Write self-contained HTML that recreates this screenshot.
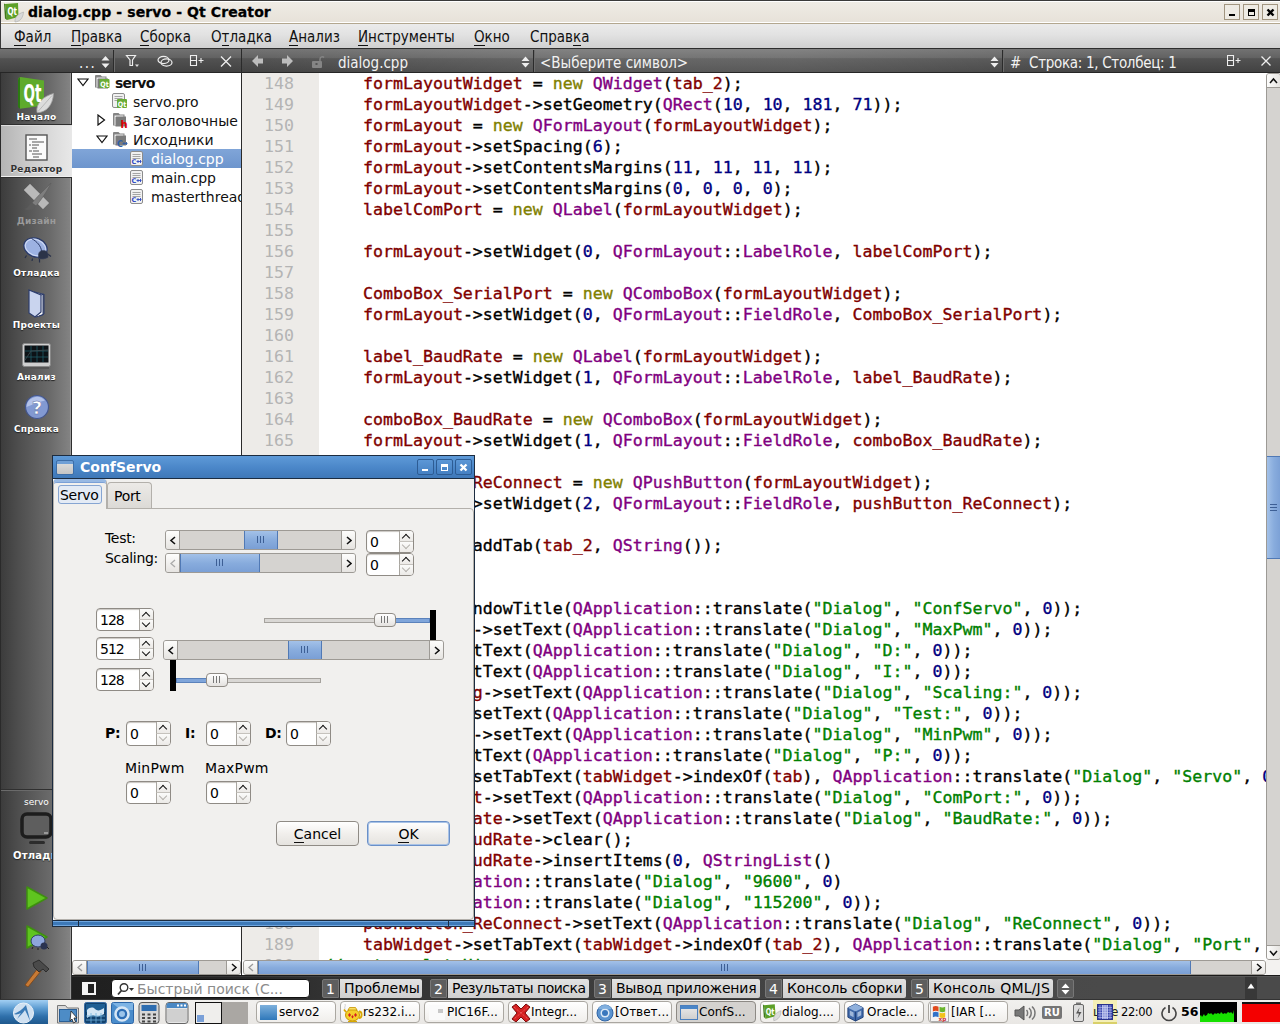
<!DOCTYPE html>
<html lang="ru"><head><meta charset="utf-8"><title>dialog.cpp - servo - Qt Creator</title>
<style>
*{box-sizing:border-box;margin:0;padding:0}
html,body{width:1280px;height:1024px;overflow:hidden;background:#fff}
body{font-family:"DejaVu Sans","Liberation Sans",sans-serif;font-size:14px;color:#000;position:relative}
i{font-style:normal}
.abs{position:absolute}
#title{position:absolute;left:0;top:0;width:1280px;height:24px;background:linear-gradient(#fff 0,#fff 1px,#efece5 1px,#e7e2d9 21px,#fff 21px,#fff 22px,#b3a78f 22px);border-top:1px solid #3a3a3a;border-left:1px solid #3a3a3a}
#title .txt{position:absolute;left:27px;top:2px;font-weight:bold;font-size:14px;line-height:18px;letter-spacing:.1px;white-space:nowrap;-webkit-text-stroke:.3px #000}
.wbtn{position:absolute;top:3px;width:16px;height:16px;border:1px solid #a19580;background:#eeebe4}
#menu{position:absolute;left:0;top:24px;width:1280px;height:24px;background:linear-gradient(#ebebeb,#e2e2e2 45%,#d0d0d0);border-left:1px solid #3a3a3a}
#menu span{position:absolute;top:3px;font-family:"DejaVu Sans Condensed","DejaVu Sans",sans-serif;font-size:15px;line-height:20px;white-space:nowrap;color:#111}
.ul{position:absolute;top:18px;height:1px;background:#111}
#tool{position:absolute;left:0;top:48px;width:1280px;height:25px;background:linear-gradient(90deg,rgba(255,255,255,0) 18%,rgba(255,255,255,.12) 45%,rgba(255,255,255,.12) 62%,rgba(255,255,255,0) 88%),linear-gradient(#727272,#626262 38%,#525252 42%,#454545 90%,#414141);border-top:1px solid #2e2e2e;border-bottom:1px solid #262626}
#tool .t{position:absolute;top:5px;color:#f2f2f2;font-size:15px;line-height:18px;white-space:nowrap;font-family:"DejaVu Sans Condensed","DejaVu Sans",sans-serif}
#tool .sep{position:absolute;top:1px;width:1px;height:22px;background:#2b2b2b;box-shadow:1px 0 0 #6c6c6c}
#mode{position:absolute;left:0;top:73px;width:72px;height:926px;background:linear-gradient(90deg,#3c3c3c,#4e4e4e 25%,#6a6a6a 70%,#848484);border-left:1px solid #2a2a2a;border-right:1px solid #2e2e2e;box-shadow:inset -1px 0 0 #9a9a9a}
#mode .lbl{position:absolute;left:0;width:71px;text-align:center;font-size:9px;font-weight:bold;letter-spacing:.25px;color:#fff;line-height:12px;text-shadow:0 1px 1px #222}
#side{position:absolute;left:72px;top:73px;width:169px;height:902px;background:#fff;overflow:hidden}
#side .row{position:absolute;left:0;width:169px;height:19px;font-size:14px;line-height:21px;white-space:nowrap;font-family:"DejaVu Sans",sans-serif;color:#111}
#vsplit{position:absolute;left:241px;top:49px;width:1px;height:926px;background:#2a2a2a}
#gutter{position:absolute;left:242px;top:73px;width:77px;height:887px;background:#edebe8;overflow:hidden;font-family:"DejaVu Sans Mono",monospace;font-size:16.6px;line-height:21px;color:#b4b4b4;text-align:right;padding-right:25px}
#code{position:absolute;left:319px;top:73px;width:947px;height:887px;background:#fff;overflow:hidden;font-family:"DejaVu Sans Mono",monospace;font-size:16.6px;line-height:21px;padding-left:4px;color:#000;-webkit-text-stroke:.35px}
#code div,#gutter div{height:21px;white-space:pre}
.f{color:#800000}.k{color:#808000}.t{color:#800080}.n{color:#000080}.s{color:#008000}.c{color:#008000}
</style><style>
/* scrollbars */
.hsb{position:absolute;height:15px;background:#d5d3d0;border:1px solid #9d9a95;border-radius:3px;overflow:hidden}
.vsb{position:absolute;width:15px;background:#d5d3d0;border:1px solid #9d9a95;border-radius:3px;overflow:hidden}
.hsb .sbb{position:absolute;top:0;bottom:0;width:14px;background:linear-gradient(#fdfdfc,#e6e4e1);display:flex;align-items:center;justify-content:center}
.hsb .sbb:first-child{border-right:1px solid #9d9a95}
.hsb .sbb:last-child{border-left:1px solid #9d9a95}
.vsb .sbb{position:absolute;left:0;right:0;height:14px;background:linear-gradient(90deg,#fdfdfc,#e6e4e1);display:flex;align-items:center;justify-content:center}
.vsb .sbb:first-child{border-bottom:1px solid #9d9a95}
.vsb .sbb:nth-child(2){border-top:1px solid #9d9a95}
.thumb{position:absolute;top:0;bottom:0;background:linear-gradient(#a3c1e8,#88acdd 50%,#7a9fd5);border-left:1px solid #5079b5;border-right:1px solid #5079b5}
.vsb .thumb{top:auto;bottom:auto;background:linear-gradient(90deg,#a3c1e8,#88acdd 50%,#7a9fd5);border:none;border-top:1px solid #5079b5;border-bottom:1px solid #5079b5}
.grip{position:absolute;left:50%;top:50%;width:7px;height:7px;margin:-4px 0 0 -4px;background:linear-gradient(90deg,#3d5f95 0,#3d5f95 1px,transparent 1px,transparent 3px,#3d5f95 3px,#3d5f95 4px,transparent 4px,transparent 6px,#3d5f95 6px)}
.gripv{position:absolute;left:50%;top:50%;width:7px;height:7px;margin:-4px 0 0 -4px;background:linear-gradient(#3d5f95 0,#3d5f95 1px,transparent 1px,transparent 3px,#3d5f95 3px,#3d5f95 4px,transparent 4px,transparent 6px,#3d5f95 6px)}
/* status */
#status{position:absolute;left:72px;top:975px;width:1208px;height:25px;background:linear-gradient(90deg,#1f1f1f 0,#262626 14%,#323232 21%,#424242 55%,#4a4a4a 85%);border-top:1px solid #1a1a1a;box-shadow:inset 0 1px 0 rgba(255,255,255,.08)}
.ob{position:absolute;top:3px;height:19px;white-space:nowrap;font-size:14px;line-height:19px;font-family:"DejaVu Sans",sans-serif}
.ob b{position:absolute;left:0;top:0;width:17px;height:19px;background:#5e5e5e;border:1px solid #777;border-radius:2px 0 0 2px;color:#fff;font-weight:normal;text-align:center;font-size:14px}
.ob span{position:absolute;left:18px;top:0;height:19px;background:linear-gradient(#e2e2e2,#cfcfcf);color:#000;padding-left:4px;border-radius:0 2px 2px 0;overflow:hidden}
/* taskbar */
#task{position:absolute;left:0;top:999px;width:1280px;height:25px;background:linear-gradient(#f1f0ee,#e9e7e4);border-top:1px solid #333}
.tb{position:absolute;top:1px;width:80px;height:22px;border:1px solid #aaa7a1;border-radius:4px;background:linear-gradient(#fff,#f0eeeb);overflow:hidden}
.tb.act{background:#d4d2cf;border-color:#8d8a85}
.tb .ic{position:absolute;left:4px;top:3px;width:20px;height:15px}
.tb span{position:absolute;left:22px;top:2px;font-size:12px;line-height:17px;white-space:nowrap;font-family:"DejaVu Sans",sans-serif;color:#000}
/* dialog */
#dlg{position:absolute;left:52px;top:455px;width:423px;height:472px;border:1px solid #1c2c40;background:#f1f0ee}
#dtitle{position:absolute;left:0;top:0;width:421px;height:23px;background:linear-gradient(#5e9ad8,#4a86c8 55%,#3f78b8);border-bottom:1px solid #1c2c40}
.dbtn{position:absolute;top:3px;width:17px;height:16px;border:1px solid #2d5c94;border-radius:2px;background:linear-gradient(#5c97d6,#4580c2)}
#dbody{position:absolute;left:0;top:23px;width:421px;height:442px;background:#f1f0ee;box-shadow:inset 1px 0 0 #fff}
#dfoot{position:absolute;left:0;bottom:0;width:421px;height:6px;background:#3d79b8;border-top:1px solid #1c2c40;box-shadow:inset 0 1px 0 #6ea6e0, inset 0 -1px 0 #6ea6e0}
.dl{font-size:14px;line-height:18px;letter-spacing:-.3px;white-space:nowrap;font-family:"DejaVu Sans",sans-serif;color:#000}
.spin{position:absolute;border:1px solid #8f8b85;border-radius:4px;background:#fff;overflow:hidden;box-shadow:inset 0 1px 1px #c9c6c1}
.spin span{position:absolute;left:3px;top:2px;font-size:14px;line-height:18px;letter-spacing:-1px;font-family:"DejaVu Sans",sans-serif}
.spin b{position:absolute;right:0;width:14px;height:50%;background:linear-gradient(#fbfbfa,#eceae7);border-left:1px solid #a9a6a0}
.spin b.up{top:0;border-bottom:1px solid #c5c2bd}
.spin b.dn{bottom:0}
.spin b::after{content:"";position:absolute;left:3px;width:5px;height:5px;border-left:1.500px solid #111;border-top:1.500px solid #111}
.spin b.up::after{top:4px;transform:rotate(45deg)}
.spin b.dn::after{top:0;transform:rotate(225deg)}
.spin b.dis::after{border-color:#b5b2ad;border-width:1px}
.shandle{position:absolute;width:22px;height:14px;border:1px solid #8f8b85;border-radius:4px;background:linear-gradient(#fff,#e4e2df)}
.shandle .grip{background:linear-gradient(90deg,#777 0,#777 1px,transparent 1px,transparent 3px,#777 3px,#777 4px,transparent 4px,transparent 6px,#777 6px)}
.pbtn{position:absolute;width:83px;height:25px;border:1px solid #8f8b85;border-radius:4px;background:linear-gradient(#fff,#f1efec 50%,#e5e3df);font-size:14px;line-height:25px;text-align:center;font-family:"DejaVu Sans",sans-serif}
.pbtn.dflt{border-color:#6a90c8;box-shadow:inset 0 0 0 1px #a8c2e6}
.pbtn .bt{position:relative;display:inline-block}.pbtn .ul{top:20px}
</style>
</head><body>
<!-- ===== main window title ===== -->
<div id="title">
 <svg class="abs" style="left:2px;top:1px" width="22" height="21" viewBox="0 0 22 21"><path d="M2 2L15 1L15.500 15L4 18Z" fill="#5da028"/><path d="M1 1.500L2 2L4 18L2 16.500Z" fill="#3d7a18"/><path d="M20.500 10C15 12 11.500 15 12 20C17 19.500 20 16 20.500 10Z" fill="#d9d9d9" stroke="#ababab" stroke-width=".6"/><text x="4.500" y="13" font-family="DejaVu Sans Condensed,DejaVu Sans" font-weight="bold" font-size="11" fill="#fff" textLength="9.500" lengthAdjust="spacingAndGlyphs">Qt</text></svg>
 <div class="txt">dialog.cpp - servo - Qt Creator</div>
 <div class="wbtn" style="left:1223px"><i class="abs" style="left:4px;top:9px;width:6px;height:2px;background:#000"></i></div>
 <div class="wbtn" style="left:1242px"><i class="abs" style="left:4px;top:4px;width:7px;height:7px;border:1px solid #000;border-top-width:3px"></i></div>
 <div class="wbtn" style="left:1261px"><svg class="abs" style="left:3px;top:3px" width="9" height="9" viewBox="0 0 9 9"><path d="M1.5 1.5L7.5 7.5M7.5 1.5L1.5 7.5" stroke="#000" stroke-width="2.4"/></svg></div>
</div>
<!-- ===== menu ===== -->
<div id="menu">
 <span style="left:13px">Файл<i class="ul" style="left:0px;width:11.6px"></i></span>
 <span style="left:70px">Правка<i class="ul" style="left:0px;width:10.2px"></i></span>
 <span style="left:139px">Сборка<i class="ul" style="left:0px;width:9.4px"></i></span>
 <span style="left:210px">Отладка<i class="ul" style="left:10.6px;width:7.9px"></i></span>
 <span style="left:288px">Анализ<i class="ul" style="left:0px;width:9.2px"></i></span>
 <span style="left:357px">Инструменты<i class="ul" style="left:0px;width:10.1px"></i></span>
 <span style="left:473px">Окно<i class="ul" style="left:0px;width:10.6px"></i></span>
 <span style="left:529px">Справка<i class="ul" style="left:43px;width:8.2px"></i></span>
</div>
<!-- ===== dark toolbar ===== -->
<div id="tool">
 <div class="t" style="left:79px;letter-spacing:1.500px">...</div>
 <svg class="abs" style="left:101px;top:7px" width="9" height="12" viewBox="0 0 9 12"><path d="M4.5 0L8.5 4.5H.5Z M4.5 12L8.5 7.5H.5Z" fill="#eee"/></svg>
 <div class="sep" style="left:113px"></div>
 <svg class="abs" style="left:125px;top:5px" width="16" height="14" viewBox="0 0 16 14"><path d="M1.5 1.5H10.5L7.5 6V11.5H5V6Z" fill="none" stroke="#eee" stroke-width="1.2"/><path d="M10 10.5h4l-2 2.5z" fill="#ddd"/></svg>
 <svg class="abs" style="left:157px;top:6px" width="16" height="12" viewBox="0 0 16 12"><ellipse cx="6.5" cy="5" rx="5.5" ry="3.6" fill="none" stroke="#eee" stroke-width="1.2"/><ellipse cx="9.5" cy="7.5" rx="5.5" ry="3.6" fill="none" stroke="#eee" stroke-width="1.2"/></svg>
 <svg class="abs" style="left:189px;top:6px" width="16" height="12" viewBox="0 0 16 12"><path d="M1.5 .5h6v10h-6zM1.5 5.5h6" fill="none" stroke="#eee" stroke-width="1.1"/><path d="M9.5 5.5h5M12 3v5" stroke="#eee" stroke-width="1.1"/></svg>
 <svg class="abs" style="left:220px;top:7px" width="12" height="11" viewBox="0 0 12 11"><path d="M1 .5L11 10.5M11 .5L1 10.5" stroke="#eee" stroke-width="1.3"/></svg>
 <svg class="abs" style="left:251px;top:5px" width="14" height="14" viewBox="0 0 14 14"><path d="M1 7L7 1V4.500H12V9.500H7V13Z" fill="#bdbdbd"/></svg>
 <svg class="abs" style="left:280px;top:5px" width="14" height="14" viewBox="0 0 14 14"><path d="M13 7L7 1V4.500H2V9.500H7V13Z" fill="#bdbdbd"/></svg>
 <svg class="abs" style="left:311px;top:6px" width="14" height="13" viewBox="0 0 14 13"><rect x="1" y="6" width="10" height="7" rx="1" fill="#858585"/><path d="M9 6V4c0-2 3-3 4-1.500" stroke="#858585" stroke-width="1.4" fill="none"/><rect x="4.500" y="8" width="2" height="2" fill="#555"/></svg>
 <div class="t" style="left:338px">dialog.cpp</div>
 <svg class="abs" style="left:521px;top:7px" width="9" height="12" viewBox="0 0 9 12"><path d="M4.5 .5L8.5 5H.5Z M4.5 11.5L8.5 7H.5Z" fill="#eee"/></svg>
 <div class="sep" style="left:533px"></div>
 <div class="t" style="left:540px">&lt;Выберите символ&gt;</div>
 <svg class="abs" style="left:990px;top:7px" width="9" height="12" viewBox="0 0 9 12"><path d="M4.5 .5L8.5 5H.5Z M4.5 11.500L8.500 7H.5Z" fill="#eee"/></svg>
 <div class="sep" style="left:1002px"></div>
 <div class="t" style="left:1010px">#</div>
 <div class="t" style="left:1029px;letter-spacing:-.3px">Строка: 1, Столбец: 1</div>
 <svg class="abs" style="left:1227px;top:6px" width="16" height="12" viewBox="0 0 16 12"><path d="M.5 .5h6v10h-6zM.5 5.5h6" fill="none" stroke="#eee" stroke-width="1.100"/><path d="M8.500 5.500h5M11 3v5" stroke="#eee" stroke-width="1.100"/></svg>
 <svg class="abs" style="left:1261px;top:7px" width="10" height="10" viewBox="0 0 10 10"><path d="M.5 .5L9.5 9.5M9.5 .5L.5 9.5" stroke="#eee" stroke-width="1.3"/></svg>
</div>
<!-- ===== mode bar ===== -->
<div id="mode">
 <div class="abs" style="left:0;top:51px;width:71px;height:1px;background:#2e2e2e"></div>
 <div class="abs" style="left:0;top:52px;width:71px;height:52px;background:linear-gradient(90deg,#b4b4b4,#cfcfcf 45%,#e8e8e8);border-top:1px solid #dedede;border-bottom:1px solid #f0f0f0"></div>
 <div class="abs" style="left:0;top:104px;width:71px;height:1px;background:#2e2e2e"></div>
 <!-- Qt logo -->
 <svg class="abs" style="left:16px;top:3px" width="38" height="38" viewBox="0 0 38 38"><path d="M1 4Q1 1.500 3.500 1L27 4.500V29.500L3 32.800Z" fill="#5eaa2c"/><path d="M1 4Q1 2 3 1.200L3 32.800L1 31Z" fill="#2c7a12"/><path d="M36.500 17.500C27 20 18.500 27 20 36.500C29 37 36 29 36.500 17.500Z" fill="#dcdcdc" stroke="#a2a2a2" stroke-width=".8"/><path d="M21 35.500L35 19.500" stroke="#b0b0b0" stroke-width=".8"/><text x="6.500" y="26" font-family="DejaVu Sans Condensed,DejaVu Sans" font-weight="bold" font-size="25" fill="#fff" textLength="18" lengthAdjust="spacingAndGlyphs">Qt</text></svg>
 <div class="lbl" style="top:38px">Начало</div>
 <!-- editor -->
 <svg class="abs" style="left:24px;top:61px" width="24" height="28" viewBox="0 0 24 28"><rect x="1" y="1" width="21" height="25" fill="#fafafa" stroke="#555" stroke-width="1.4"/><path d="M4 5h8M7 8h12M4 11h2M7 11h7M7 14h5M4 17h3M8 17h6M7 20h10M8 23h6" stroke="#555" stroke-width="1"/></svg>
 <div class="lbl" style="top:90px;color:#333;text-shadow:0 1px 0 #eee">Редактор</div>
 <!-- design -->
 <svg class="abs" style="left:22px;top:110px" width="30" height="30" viewBox="0 0 30 30"><path d="M1 7L7 1L26 20L20 26Z" fill="#b9b9b9" stroke="#9a9a9a"/><path d="M28 0C20 8 13 15 9 20L13 23C17 18 24 9 28 0Z" fill="#7e7e7e" stroke="#5a5a5a" stroke-width=".6"/><path d="M9 20C6 21 6 25 1 26C6 28 11 27 13 23Z" fill="#5c5c5c"/></svg>
 <div class="lbl" style="top:142px;color:#9a9a9a;text-shadow:none">Дизайн</div>
 <!-- debug -->
 <svg class="abs" style="left:21px;top:163px" width="32" height="28" viewBox="0 0 32 28"><path d="M4.500 19.500l-1.500 2.500M10.500 22.500l-.5 2.500M17.500 23v3.500M25 17.500l4 3" stroke="#27304a" stroke-width="1.200"/><ellipse cx="13.500" cy="11.500" rx="12" ry="9.300" fill="#9db2e2" stroke="#2a3a68" stroke-width="1.200" transform="rotate(22 13.500 11.500)"/><ellipse cx="13.500" cy="11.500" rx="10.500" ry="7.800" fill="none" stroke="#dbe4f7" stroke-width="1" opacity=".8" transform="rotate(22 13.500 11.500)"/><path d="M9.500 2.500C15 5.500 19 10 19.500 15" stroke="#2a3a68" stroke-width="1" fill="none"/><path d="M16.500 22.500V18.500A4.800 4.800 0 0 1 26 18.500V21.500Q21 24 16.500 22.500Z" fill="#2b3348" stroke="#39425c" stroke-width=".6"/></svg>
 <div class="lbl" style="top:194px">Отладка</div>
 <!-- projects -->
 <svg class="abs" style="left:26px;top:215px" width="20" height="30" viewBox="0 0 20 30"><path d="M3 3L16 6V27L9 29Z" fill="#fff" stroke="#2d3d6c"/><path d="M2 2L14 7V24L8 29L2 25Z" fill="#c9d4ee" stroke="#2d3d6c" stroke-width="1.2"/><path d="M14 7L17 6V26L12 28" fill="none" stroke="#2d3d6c"/></svg>
 <div class="lbl" style="top:246px">Проекты</div>
 <!-- analyze -->
 <svg class="abs" style="left:21px;top:270px" width="30" height="26" viewBox="0 0 30 26"><rect x=".5" y=".5" width="28" height="23" rx="2" fill="#cfcfcf" stroke="#888"/><rect x="2.500" y="2.500" width="24" height="17" fill="#0d1216"/><path d="M3 8h23M3 14h23M9 3v16M15 3v16M21 3v16" stroke="#1f5a66" stroke-width=".8"/><path d="M3 17L9 8L26 7" stroke="#37474c" stroke-width="1" fill="none"/><rect x="2" y="24" width="25" height="2" fill="#555"/></svg>
 <div class="lbl" style="top:298px">Анализ</div>
 <!-- help -->
 <svg class="abs" style="left:23px;top:321px" width="26" height="26" viewBox="0 0 26 26"><circle cx="13" cy="13" r="11.500" fill="#8299d2" stroke="#44568c" stroke-width="1.200"/><path d="M2.500 13A10.500 10.500 0 0 1 21 6.500C15 8 8 11 2.500 13Z" fill="#c3d0f0" opacity=".75"/><text x="13" y="20" text-anchor="middle" font-family="DejaVu Sans" font-weight="bold" font-size="18" fill="#fff" stroke="#5a6ca4" stroke-width=".5">?</text></svg>
 <div class="lbl" style="top:350px">Справка</div>
 <!-- target selector -->
 <div class="abs" style="left:0;top:716px;width:71px;height:1px;background:#303030;box-shadow:0 1px 0 #6a6a6a"></div>
 <div class="abs" style="left:0;top:724px;width:71px;text-align:center;font-size:9px;line-height:11px;color:#fff">servo</div>
 <svg class="abs" style="left:19px;top:739px" width="34" height="34" viewBox="0 0 34 34"><rect x="2" y="2" width="29" height="23" rx="5" fill="#5e5e5e" stroke="#1d1d1d" stroke-width="3.500"/><rect x="24" y="20" width="4" height="2" fill="#999"/><rect x="9" y="29" width="16" height="3" rx="1.500" fill="#2c2c2c"/></svg>
 <div class="lbl" style="top:777px;font-size:10px;left:12px;width:58px;text-align:left;overflow:hidden;white-space:nowrap">Отладка</div>
 <!-- run buttons -->
 <svg class="abs" style="left:24px;top:812px" width="24" height="26" viewBox="0 0 24 26"><path d="M2 2L22 13L2 24Z" fill="#5fc41f" stroke="#3e8f10" stroke-width="1.500" stroke-linejoin="round"/></svg>
 <svg class="abs" style="left:24px;top:851px" width="26" height="28" viewBox="0 0 26 28"><path d="M2 2L22 13L2 24Z" fill="#5fc41f" stroke="#3e8f10" stroke-width="1.500" stroke-linejoin="round"/><ellipse cx="13" cy="17" rx="7" ry="6" fill="#8ea6dc" stroke="#2e3d66"/><circle cx="19" cy="22" r="3.500" fill="#2a3350"/><path d="M8 23l-1 2M13 24v2M22 23l2 2" stroke="#222"/></svg>
 <svg class="abs" style="left:20px;top:886px" width="30" height="28" viewBox="0 0 30 28"><path d="M4 26L17 9L20 12L7 28Z" fill="#c77a35" stroke="#7a4418" stroke-width=".8"/><path d="M12 4L18 1L28 10L25 13L22 10L18 13L13 8Z" fill="#4a4a4a" stroke="#222" stroke-width=".8"/></svg>
</div>
<!-- ===== project tree ===== -->
<div id="side">
 <div class="row" style="top:0"><svg class="abs" style="left:5px;top:5px" width="12" height="9" viewBox="0 0 12 9"><path d="M1 1h10L6 7.500z" fill="#fff" stroke="#111" stroke-width="1.200"/></svg>
  <svg class="abs" style="left:22px;top:1px" width="17" height="16" viewBox="0 0 17 16"><path d="M1 13.500V2Q1 1 2 1H6.500L8 2.500H12.500V13.500Z" fill="#858585"/><rect x="2.500" y="3.500" width="9" height="9.500" fill="#f2f2f2"/><path d="M3.500 5.500Q3.500 4.500 4.500 4.500H14V14.500H3.500Z" fill="#7b7b7b"/><g transform="translate(5.500 5)"><rect x="0" y="0" width="10" height="9" rx="1" fill="#68ac35"/><text x=".8" y="7.500" font-family="DejaVu Sans Condensed,DejaVu Sans" font-weight="bold" font-size="7.500" fill="#fff" textLength="8.500" lengthAdjust="spacingAndGlyphs">Qt</text></g></svg>
  <span class="abs" style="left:43px;font-weight:bold;letter-spacing:-.8px;font-family:'DejaVu Sans',sans-serif">servo</span></div>
 <div class="row" style="top:19px"><svg class="abs" style="left:40px;top:1px" width="17" height="16" viewBox="0 0 17 16"><rect x=".5" y=".5" width="12" height="14" rx="1.500" fill="#f1f1f1" stroke="#8c8c8c"/><path d="M2.500 3.500h8M2.500 5.500h8M2.500 7.500h8" stroke="#a5a5a5"/><g transform="translate(5 6)"><rect x="0" y="0" width="10" height="9" rx="1" fill="#68ac35"/><text x=".8" y="7.500" font-family="DejaVu Sans Condensed,DejaVu Sans" font-weight="bold" font-size="7.500" fill="#fff" textLength="8.500" lengthAdjust="spacingAndGlyphs">Qt</text></g></svg>
  <span class="abs" style="left:61px">servo.pro</span></div>
 <div class="row" style="top:38px"><svg class="abs" style="left:25px;top:3px" width="9" height="12" viewBox="0 0 9 12"><path d="M1 1v10L7.500 6z" fill="#fff" stroke="#111" stroke-width="1.200"/></svg>
  <svg class="abs" style="left:40px;top:1px" width="17" height="16" viewBox="0 0 17 16"><path d="M1 13.500V2Q1 1 2 1H6.500L8 2.500H12.500V13.500Z" fill="#858585"/><rect x="2.500" y="3.500" width="9" height="9.500" fill="#f2f2f2"/><path d="M3.500 5.500Q3.500 4.500 4.500 4.500H14V14.500H3.500Z" fill="#7b7b7b"/><text x="8.500" y="15.500" font-family="DejaVu Sans" font-weight="bold" font-size="10" fill="#e00000">h</text></svg>
  <span class="abs" style="left:61px">Заголовочные</span></div>
 <div class="row" style="top:57px"><svg class="abs" style="left:24px;top:5px" width="12" height="9" viewBox="0 0 12 9"><path d="M1 1h10L6 7.500z" fill="#fff" stroke="#111" stroke-width="1.200"/></svg>
  <svg class="abs" style="left:40px;top:1px" width="17" height="16" viewBox="0 0 17 16"><path d="M1 13.500V2Q1 1 2 1H6.500L8 2.500H12.500V13.500Z" fill="#858585"/><rect x="2.500" y="3.500" width="9" height="9.500" fill="#f2f2f2"/><path d="M3.500 5.500Q3.500 4.500 4.500 4.500H14V14.500H3.500Z" fill="#7b7b7b"/><text x="5" y="15.500" font-family="DejaVu Sans" font-weight="bold" font-size="8" fill="#2f5fa8">C</text><path d="M10.500 12.500h5M12 11v3M14.500 11v3" stroke="#2f5fa8" stroke-width=".9"/></svg>
  <span class="abs" style="left:61px">Исходники</span></div>
 <div class="row" style="top:76px;background:linear-gradient(#80a5d8,#6d95cd);color:#fff"><svg class="abs" style="left:58px;top:2px" width="14" height="15" viewBox="0 0 14 15"><rect x=".5" y=".5" width="12" height="14" rx="1.500" fill="#f1f1f1" stroke="#8c8c8c"/><path d="M2.500 3.500h8M2.500 5.500h8M2.500 7.500h8" stroke="#a5a5a5"/><text x="1.500" y="12.500" font-family="DejaVu Sans" font-weight="bold" font-size="6.500" fill="#2f49c4">C</text><path d="M6.500 10.500h5M8 9v3M10.500 9v3" stroke="#2f49c4" stroke-width=".9"/></svg>
  <span class="abs" style="left:79px">dialog.cpp</span></div>
 <div class="row" style="top:95px"><svg class="abs" style="left:58px;top:2px" width="14" height="15" viewBox="0 0 14 15"><rect x=".5" y=".5" width="12" height="14" rx="1.500" fill="#f1f1f1" stroke="#8c8c8c"/><path d="M2.500 3.500h8M2.500 5.500h8M2.500 7.500h8" stroke="#a5a5a5"/><text x="1.500" y="12.500" font-family="DejaVu Sans" font-weight="bold" font-size="6.500" fill="#2f49c4">C</text><path d="M6.500 10.500h5M8 9v3M10.500 9v3" stroke="#2f49c4" stroke-width=".9"/></svg>
  <span class="abs" style="left:79px">main.cpp</span></div>
 <div class="row" style="top:114px"><svg class="abs" style="left:58px;top:2px" width="14" height="15" viewBox="0 0 14 15"><rect x=".5" y=".5" width="12" height="14" rx="1.500" fill="#f1f1f1" stroke="#8c8c8c"/><path d="M2.500 3.500h8M2.500 5.500h8M2.500 7.500h8" stroke="#a5a5a5"/><text x="1.500" y="12.500" font-family="DejaVu Sans" font-weight="bold" font-size="6.500" fill="#2f49c4">C</text><path d="M6.500 10.500h5M8 9v3M10.500 9v3" stroke="#2f49c4" stroke-width=".9"/></svg>
  <span class="abs" style="left:79px">masterthread.cpp</span></div>
 <!-- h scrollbar -->
 <div class="hsb" style="left:0;top:887px;width:169px">
  <div class="sbb" style="left:0"><svg width="8" height="9" viewBox="0 0 8 9"><path d="M6 1L2 4.500L6 8" fill="none" stroke="#999" stroke-width="1.300"/></svg></div>
  <div class="thumb" style="left:14px;width:112px"><i class="grip"></i></div>
  <div class="sbb" style="right:0"><svg width="8" height="9" viewBox="0 0 8 9"><path d="M2 1L6 4.500L2 8" fill="none" stroke="#111" stroke-width="1.500"/></svg></div>
 </div>
</div>
<div id="vsplit"></div>
<!-- ===== editor ===== -->
<div id="gutter"><div>148</div><div>149</div><div>150</div><div>151</div><div>152</div><div>153</div><div>154</div><div>155</div><div>156</div><div>157</div><div>158</div><div>159</div><div>160</div><div>161</div><div>162</div><div>163</div><div>164</div><div>165</div><div>166</div><div>167</div><div>168</div><div>169</div><div>170</div><div>171</div><div>172</div><div>173</div><div>174</div><div>175</div><div>176</div><div>177</div><div>178</div><div>179</div><div>180</div><div>181</div><div>182</div><div>183</div><div>184</div><div>185</div><div>186</div><div>187</div><div>188</div><div>189</div><div>190</div></div>
<div id="code"><div>    <i class="f">formLayoutWidget</i> = <i class="k">new</i> <i class="t">QWidget</i>(<i class="f">tab_2</i>);</div><div>    <i class="f">formLayoutWidget</i>-&gt;setGeometry(<i class="t">QRect</i>(<i class="n">10</i>, <i class="n">10</i>, <i class="n">181</i>, <i class="n">71</i>));</div><div>    <i class="f">formLayout</i> = <i class="k">new</i> <i class="t">QFormLayout</i>(<i class="f">formLayoutWidget</i>);</div><div>    <i class="f">formLayout</i>-&gt;setSpacing(<i class="n">6</i>);</div><div>    <i class="f">formLayout</i>-&gt;setContentsMargins(<i class="n">11</i>, <i class="n">11</i>, <i class="n">11</i>, <i class="n">11</i>);</div><div>    <i class="f">formLayout</i>-&gt;setContentsMargins(<i class="n">0</i>, <i class="n">0</i>, <i class="n">0</i>, <i class="n">0</i>);</div><div>    <i class="f">labelComPort</i> = <i class="k">new</i> <i class="t">QLabel</i>(<i class="f">formLayoutWidget</i>);</div><div>&nbsp;</div><div>    <i class="f">formLayout</i>-&gt;setWidget(<i class="n">0</i>, <i class="t">QFormLayout</i>::<i class="t">LabelRole</i>, <i class="f">labelComPort</i>);</div><div>&nbsp;</div><div>    <i class="f">ComboBox_SerialPort</i> = <i class="k">new</i> <i class="t">QComboBox</i>(<i class="f">formLayoutWidget</i>);</div><div>    <i class="f">formLayout</i>-&gt;setWidget(<i class="n">0</i>, <i class="t">QFormLayout</i>::<i class="t">FieldRole</i>, <i class="f">ComboBox_SerialPort</i>);</div><div>&nbsp;</div><div>    <i class="f">label_BaudRate</i> = <i class="k">new</i> <i class="t">QLabel</i>(<i class="f">formLayoutWidget</i>);</div><div>    <i class="f">formLayout</i>-&gt;setWidget(<i class="n">1</i>, <i class="t">QFormLayout</i>::<i class="t">LabelRole</i>, <i class="f">label_BaudRate</i>);</div><div>&nbsp;</div><div>    <i class="f">comboBox_BaudRate</i> = <i class="k">new</i> <i class="t">QComboBox</i>(<i class="f">formLayoutWidget</i>);</div><div>    <i class="f">formLayout</i>-&gt;setWidget(<i class="n">1</i>, <i class="t">QFormLayout</i>::<i class="t">FieldRole</i>, <i class="f">comboBox_BaudRate</i>);</div><div>&nbsp;</div><div>    <i class="f">pushButton_ReConnect</i> = <i class="k">new</i> <i class="t">QPushButton</i>(<i class="f">formLayoutWidget</i>);</div><div>    <i class="f">formLayout</i>-&gt;setWidget(<i class="n">2</i>, <i class="t">QFormLayout</i>::<i class="t">FieldRole</i>, <i class="f">pushButton_ReConnect</i>);</div><div>&nbsp;</div><div>    <i class="f">tabWidget</i>-&gt;addTab(<i class="f">tab_2</i>, <i class="t">QString</i>());</div><div>&nbsp;</div><div>&nbsp;</div><div>    <i class="k">this</i>-&gt;setWindowTitle(<i class="t">QApplication</i>::translate(<i class="s">"Dialog"</i>, <i class="s">"ConfServo"</i>, <i class="n">0</i>));</div><div>    <i class="f">labelMaxPwm</i>-&gt;setText(<i class="t">QApplication</i>::translate(<i class="s">"Dialog"</i>, <i class="s">"MaxPwm"</i>, <i class="n">0</i>));</div><div>    <i class="f">label_D</i>-&gt;setText(<i class="t">QApplication</i>::translate(<i class="s">"Dialog"</i>, <i class="s">"D:"</i>, <i class="n">0</i>));</div><div>    <i class="f">label_I</i>-&gt;setText(<i class="t">QApplication</i>::translate(<i class="s">"Dialog"</i>, <i class="s">"I:"</i>, <i class="n">0</i>));</div><div>    <i class="f">labelScaling</i>-&gt;setText(<i class="t">QApplication</i>::translate(<i class="s">"Dialog"</i>, <i class="s">"Scaling:"</i>, <i class="n">0</i>));</div><div>    <i class="f">labelTest</i>-&gt;setText(<i class="t">QApplication</i>::translate(<i class="s">"Dialog"</i>, <i class="s">"Test:"</i>, <i class="n">0</i>));</div><div>    <i class="f">labelMinPwm</i>-&gt;setText(<i class="t">QApplication</i>::translate(<i class="s">"Dialog"</i>, <i class="s">"MinPwm"</i>, <i class="n">0</i>));</div><div>    <i class="f">label_P</i>-&gt;setText(<i class="t">QApplication</i>::translate(<i class="s">"Dialog"</i>, <i class="s">"P:"</i>, <i class="n">0</i>));</div><div>    <i class="f">tabWidget</i>-&gt;setTabText(<i class="f">tabWidget</i>-&gt;indexOf(<i class="f">tab</i>), <i class="t">QApplication</i>::translate(<i class="s">"Dialog"</i>, <i class="s">"Servo"</i>, <i class="n">0</i>));</div><div>    <i class="f">labelComPort</i>-&gt;setText(<i class="t">QApplication</i>::translate(<i class="s">"Dialog"</i>, <i class="s">"ComPort:"</i>, <i class="n">0</i>));</div><div>    <i class="f">label_BaudRate</i>-&gt;setText(<i class="t">QApplication</i>::translate(<i class="s">"Dialog"</i>, <i class="s">"BaudRate:"</i>, <i class="n">0</i>));</div><div>    <i class="f">comboBox_BaudRate</i>-&gt;clear();</div><div>    <i class="f">comboBox_BaudRate</i>-&gt;insertItems(<i class="n">0</i>, <i class="t">QStringList</i>()</div><div>     &lt;&lt; <i class="t">QApplication</i>::translate(<i class="s">"Dialog"</i>, <i class="s">"9600"</i>, <i class="n">0</i>)</div><div>     &lt;&lt; <i class="t">QApplication</i>::translate(<i class="s">"Dialog"</i>, <i class="s">"115200"</i>, <i class="n">0</i>));</div><div>    <i class="f">pushButton_ReConnect</i>-&gt;setText(<i class="t">QApplication</i>::translate(<i class="s">"Dialog"</i>, <i class="s">"ReConnect"</i>, <i class="n">0</i>));</div><div>    <i class="f">tabWidget</i>-&gt;setTabText(<i class="f">tabWidget</i>-&gt;indexOf(<i class="f">tab_2</i>), <i class="t">QApplication</i>::translate(<i class="s">"Dialog"</i>, <i class="s">"Port"</i>, <i class="n">0</i>));</div><div><i class="c">// retranslateUi</i></div></div>
<!-- vertical scrollbar -->
<div class="vsb" style="left:1266px;top:73px;height:887px">
 <div class="sbb" style="top:0"><svg width="9" height="8" viewBox="0 0 9 8"><path d="M1 6L4.500 2L8 6" fill="none" stroke="#111" stroke-width="1.500"/></svg></div>
 <div class="sbb" style="bottom:0"><svg width="9" height="8" viewBox="0 0 9 8"><path d="M1 2L4.500 6L8 2" fill="none" stroke="#111" stroke-width="1.500"/></svg></div>
 <div class="thumb" style="top:382px;height:103px;left:0;width:14px"><i class="gripv"></i></div>
</div>
<!-- horizontal scrollbar -->
<div class="hsb" style="left:243px;top:960px;width:1023px">
 <div class="sbb" style="left:0"><svg width="8" height="9" viewBox="0 0 8 9"><path d="M6 1L2 4.500L6 8" fill="none" stroke="#999" stroke-width="1.300"/></svg></div>
 <div class="thumb" style="left:14px;width:933px"><i class="grip"></i></div>
 <div class="sbb" style="right:0"><svg width="8" height="9" viewBox="0 0 8 9"><path d="M2 1L6 4.500L2 8" fill="none" stroke="#111" stroke-width="1.500"/></svg></div>
</div>
<div class="abs" style="left:1266px;top:960px;width:14px;height:15px;background:#f3f2f0"></div>
<!-- ===== status bar ===== -->
<div id="status">
 <div class="abs" style="left:10px;top:6px;width:14px;height:13px;border:2px solid #f4f4f4;border-left-width:6px;background:#222"></div>
 <div class="abs" style="left:39px;top:3px;width:199px;height:19px;background:#fff;border-radius:4px;border:1px solid #111">
  <svg class="abs" style="left:5px;top:2px" width="18" height="14" viewBox="0 0 18 14"><circle cx="7" cy="5.500" r="3.800" fill="none" stroke="#333" stroke-width="1.400"/><path d="M4.500 8.500L1 12.500" stroke="#333" stroke-width="1.800"/><path d="M12 6h5l-2.500 3z" fill="#333"/></svg>
  <span class="abs" style="left:25px;top:0;font-size:14px;line-height:18px;color:#8c8c8c;white-space:nowrap;font-family:'DejaVu Sans',sans-serif">Быстрый поиск (C...</span>
 </div>
 <div class="ob" style="left:250px"><b>1</b><span style="width:82px">Проблемы</span></div>
 <div class="ob" style="left:358px"><b>2</b><span style="width:141px;letter-spacing:-.49px">Результаты поиска</span></div>
 <div class="ob" style="left:522px"><b>3</b><span style="width:148px;letter-spacing:-.24px">Вывод приложения</span></div>
 <div class="ob" style="left:693px"><b>4</b><span style="width:123px;letter-spacing:-.1px">Консоль сборки</span></div>
 <div class="ob" style="left:839px"><b>5</b><span style="width:124px;letter-spacing:.2px">Консоль QML/JS</span></div>
 <div class="abs" style="left:985px;top:3px;width:17px;height:19px;background:#5c5c5c;border-radius:2px;border:1px solid #777"><svg class="abs" style="left:3px;top:3px" width="9" height="12" viewBox="0 0 9 12"><path d="M4.500 .5L8.500 5H.5Z M4.500 11.500L8.500 7H.5Z" fill="#fff"/></svg></div>
 <div class="abs" style="left:1173px;top:1px;width:12px;height:23px;background:#383838"></div><svg class="abs" style="left:1175px;top:7px" width="8" height="6" viewBox="0 0 8 6"><path d="M4 .5L7.500 5.500H.5Z" fill="#fff"/></svg>
</div>
<!-- ===== desktop taskbar ===== -->
<div id="task">
 <div class="abs" style="left:0;top:0;width:48px;height:25px;background:linear-gradient(#a2cff3,#5a9ad0 35%,#2f70ab 65%,#1c5589)">
  <svg class="abs" style="left:12px;top:1px" width="24" height="23" viewBox="0 0 24 23"><circle cx="11.500" cy="12" r="10" fill="#cfe0f1" stroke="#e9f1f9" stroke-width="1"/><path d="M2 13C6 11 10 9 14 4C15 8 17 14 18 20C16 15 14 11 13 9C11 12 8 15 5 18C7 15 8 13 9 12C7 13 4 14 2 13Z" fill="#3b7ab6"/></svg>
 </div>
 <svg class="abs" style="left:56px;top:2px" width="24" height="22" viewBox="0 0 24 22"><path d="M1.500 3.500h8l2 2.500h11v15h-21z" fill="#d8d8d8" stroke="#777"/><rect x="3.500" y="7.500" width="17" height="12" fill="#4d8cc6" stroke="#2b5f95"/><path d="M15 9l6 7h-3l1.500 4-2 1-1.500-4-2 2z" fill="#fff" stroke="#222" stroke-width=".8"/></svg>
 <svg class="abs" style="left:84px;top:2px" width="23" height="22" viewBox="0 0 23 22"><rect x=".5" y=".5" width="22" height="21" rx="2" fill="#12426e" stroke="#3b6ea5"/><rect x="2" y="2" width="19" height="8" fill="#1f5f94"/><path d="M3 8c3-3 6-3 8-1s5 2 9-1v6c-4 2-6 3-9 2s-5 0-8 2z" fill="#d4e6f4"/><path d="M2 14h19M2 18h19M7 11v10M12 11v10M17 11v10" stroke="#6fb0dc" stroke-width=".8"/></svg>
 <svg class="abs" style="left:111px;top:2px" width="23" height="22" viewBox="0 0 23 22"><rect x=".5" y=".5" width="22" height="21" rx="2" fill="#4a8ccb" stroke="#2c66a8"/><path d="M1 1h21v7H10z" fill="#7db3e4"/><circle cx="11" cy="12" r="6.500" fill="#2d6db5" stroke="#d7e6f5" stroke-width="2.500"/><circle cx="11" cy="12" r="3" fill="#9cc4ea"/></svg>
 <svg class="abs" style="left:138px;top:2px" width="22" height="22" viewBox="0 0 22 22"><rect x="1" y=".5" width="20" height="21" rx="3" fill="#d6d6d6" stroke="#555"/><rect x="3.500" y="3" width="15" height="6" fill="#2e6db0"/><path d="M4 11.500h3v2H4zM9.500 11.500h3v2h-3zM15 11.500h3v2h-3zM4 15h3v2H4zM9.500 15h3v2h-3zM15 15h3v2h-3zM4 18.500h3v2H4zM9.500 18.500h3v2h-3zM15 18.500h3v2h-3z" fill="#444"/></svg>
 <svg class="abs" style="left:165px;top:2px" width="24" height="22" viewBox="0 0 24 22"><rect x="1" y=".5" width="22" height="21" rx="3" fill="#e6e6e6" stroke="#666"/><path d="M1.500 3.500c0-2 1-2.500 3-2.500h15c2 0 3 .5 3 2.500V6h-21z" fill="#4a88c4"/><path d="M12 2.500h2v2h-2zM15.500 2.500h2v2h-2zM19 2.500h2v2h-2z" fill="#fff"/><rect x="2" y="7" width="20" height="13" fill="#d0d0d0"/></svg>
 <div class="abs" style="left:195px;top:2px;width:27px;height:22px;background:#efeeec;border:1px solid #111"><i class="abs" style="left:1px;top:12px;width:7px;height:7px;background:#7aa0d8"></i></div>
 <div class="abs" style="left:222px;top:2px;width:26px;height:22px;background:#aaa7a3"></div>
 <div class="tb" style="left:256px"><i class="ic" style="left:3px;width:17px;background:linear-gradient(#7db0dc,#2f78ba)"></i><span>servo2</span></div>
 <div class="tb" style="left:340px"><svg class="abs" style="left:2px;top:0" width="20" height="21" viewBox="0 0 20 21"><path d="M2 2c1 2-1 3 0 5" fill="none" stroke="#cfcfcf" stroke-width="1"/><ellipse cx="9.500" cy="13" rx="7" ry="6" fill="#f5cf2a" stroke="#c79400"/><path d="M5 8h9l-1.500-2.500h-6z" fill="#f8de62" stroke="#c79400" stroke-width=".8"/><path d="M16 9.500c3.500 0 3.500 6.500 0 6.500" fill="none" stroke="#d9a800" stroke-width="1.800"/><path d="M3 10L1 7.500" stroke="#d9a800" stroke-width="1.800"/><path d="M6.500 11l1.500 2-1.500 2-1.500-2zM12.500 11l1.500 2-1.500 2-1.500-2zM9.500 13l1.200 1.800-1.200 1.800-1.200-1.800z" fill="#d42020"/><rect x="5" y="19" width="9" height="1.500" fill="#d9a800"/></svg><span>rs232.i...</span></div>
 <div class="tb" style="left:424px"><i class="ic" style="background:#fafafa;left:4px;width:16px"></i><i class="abs" style="left:13px;top:7px;width:5px;height:4px;background:#c8c8c8"></i><span>PIC16F...</span></div>
 <div class="tb" style="left:508px"><svg class="abs" style="left:1px;top:1px" width="22" height="20" viewBox="0 0 22 20"><path d="M2 4L6 1L11 6L16 1L20 4L15 10L20 16L16 19L11 14L6 19L2 16L7 10Z" fill="#d42020" stroke="#7a0c0c"/><path d="M4 4l14 12M18 4L4 16" stroke="#f06a6a" stroke-width="1" stroke-dasharray="1 1"/></svg><span>Integr...</span></div>
 <div class="tb" style="left:592px"><svg class="abs" style="left:3px;top:2px" width="18" height="18" viewBox="0 0 18 18"><circle cx="9" cy="9" r="8" fill="#5b93cf" stroke="#2f64a4"/><circle cx="9" cy="9" r="4.500" fill="#dce9f6"/><circle cx="9" cy="9" r="3" fill="#3a77bd"/><path d="M2 5a8 8 0 0 1 14 0H9z" fill="#8ab6e2" opacity=".8"/></svg><span>[Ответ...</span></div>
 <div class="tb act" style="left:676px"><i class="ic" style="left:3px;width:18px;background:linear-gradient(#4a86c8 0,#4a86c8 22%,#e4e4e4 22%,#cfcfcf);border:1px solid #4a7fbe"></i><span>ConfS...</span></div>
 <div class="tb" style="left:760px"><svg class="abs" style="left:1px;top:1px" width="20" height="19" viewBox="0 0 22 20"><path d="M2 2L14 1L15 14L4 17Z" fill="#5da028"/><path d="M1 1L2 2L4 17L2 15Z" fill="#3d7a18"/><path d="M21 8C15 10 12 14 13 19C18 18 21 14 21 8Z" fill="#dcdcdc" stroke="#aaa" stroke-width=".6"/><text x="4" y="12.500" font-family="DejaVu Sans Condensed,DejaVu Sans" font-weight="bold" font-size="10" fill="#fff" textLength="9.500" lengthAdjust="spacingAndGlyphs">Qt</text></svg><span style="left:21px">dialog....</span></div>
 <div class="tb" style="left:844px"><svg class="abs" style="left:1px;top:1px" width="19" height="19" viewBox="0 0 20 20"><path d="M10 1L18 5V15L10 19L2 15V5Z" fill="#3f68a8" stroke="#1f3f78"/><path d="M10 1L18 5L10 9L2 5Z" fill="#8fb0dc"/><path d="M10 9V19" stroke="#1f3f78"/><path d="M4 8l4 2v5l-4-2zM12 10l4-2v5l-4 2z" fill="#c9d9ee" opacity=".7"/></svg><span style="left:22px">Oracle...</span></div>
 <div class="tb" style="left:928px"><svg class="abs" style="left:1px;top:1px" width="19" height="19" viewBox="0 0 20 20"><rect x=".5" y=".5" width="19" height="19" fill="#f4f4f4" stroke="#aaa"/><path d="M3 4c2-1 4-1 6 0v5c-2-1-4-1-6 0z" fill="#e04a1c"/><path d="M10 4c2 1 4 1 6 0v5c-2 1-4 1-6 0z" fill="#6ab52e"/><path d="M3 10c2-1 4-1 6 0v5c-2-1-4-1-6 0z" fill="#2f72c8"/><path d="M10 10c2 1 4 1 6 0v5c-2 1-4 1-6 0z" fill="#f2c21a"/><text x="9" y="19" font-family="DejaVu Sans" font-weight="bold" font-size="6" fill="#c33">xp</text></svg><span style="left:22px">[IAR [...</span></div>
 <!-- tray -->
 <svg class="abs" style="left:1014px;top:5px" width="22" height="16" viewBox="0 0 22 16"><path d="M1 5h4l5-4v14l-5-4H1z" fill="#777" stroke="#555"/><path d="M12.500 5c1.500 1.500 1.500 4.500 0 6M15 3c3 2.500 3 7.500 0 10M18 1.500c4 3.500 4 9.500 0 13" fill="none" stroke="#777" stroke-width="1.500"/></svg>
 <div class="abs" style="left:1042px;top:6px;width:20px;height:13px;background:#757575;border-radius:2px;color:#fff;font-size:10px;font-weight:bold;line-height:13px;text-align:center">RU</div>
 <svg class="abs" style="left:1072px;top:2px" width="13" height="21" viewBox="0 0 13 21"><rect x="4" y=".5" width="5" height="2" fill="#777"/><rect x="1.500" y="2.500" width="10" height="17" rx="1.500" fill="#dcdcdc" stroke="#666"/><path d="M7.500 5.500L4 11.500h3l-1.500 5L9.500 10H6.500z" fill="#555"/></svg>
 <div class="abs" style="left:1093px;top:0;width:24px;height:24px;background:#f4efb6;border-bottom:2px solid #d9d06a"></div>
 <div class="abs" style="left:1093px;top:4px;font-size:12px;line-height:16px;color:#222">ц</div>
 <div class="abs" style="left:1111px;top:4px;font-size:12px;line-height:16px;color:#222">е</div>
 <svg class="abs" style="left:1097px;top:4px" width="16" height="16" viewBox="0 0 16 16"><rect x=".5" y=".5" width="15" height="15" fill="#3a48b0" stroke="#2a338a"/><rect x="5" y="1" width="6" height="14" fill="#aab4ea" opacity=".75"/><path d="M3 1v14M5.500 1v14M8 1v14M10.500 1v14M13 1v14M1 3.500h14M1 6h14M1 8.500h14M1 11h14M1 13.500h14" stroke="#dfe3fa" stroke-width=".6" opacity=".8"/></svg>
 <div class="abs" style="left:1121px;top:4px;font-size:11.500px;line-height:16px;letter-spacing:-.4px;font-family:'DejaVu Sans',sans-serif;color:#000">22:00</div>
 <svg class="abs" style="left:1160px;top:4px" width="18" height="18" viewBox="0 0 18 18"><path d="M5.500 3.500a7 7 0 1 0 7 0" fill="none" stroke="#444" stroke-width="1.600"/><path d="M9 1v8" stroke="#444" stroke-width="1.800"/></svg>
 <div class="abs" style="left:1181px;top:4px;font-size:12.500px;font-weight:bold;line-height:16px">56</div>
 <div class="abs" style="left:1200px;top:2px;width:37px;height:20px;background:#000"><svg class="abs" style="left:0;top:0" width="37" height="20" viewBox="0 0 37 20"><path d="M0 20V14l1-1 1 2 2-3 1 2 2-1 1-2 2 1 1-1 2 2 2-2 1 1 2-1 2 1 1-2 2 2 2-1 1 1 2-2 2 1 1-1 2 2 1-4V20H0z" fill="#16e000"/></svg></div>
 <div class="abs" style="left:1242px;top:2px;width:38px;height:20px;background:#f40000;border-top:2px solid #111"></div>
</div>
<!-- ===== ConfServo dialog ===== -->
<div id="dlg">
 <div id="dtitle">
  <div class="abs" style="left:3px;top:4px;width:18px;height:15px;border-radius:2px;background:linear-gradient(#6f9fd6 0,#6f9fd6 25%,#d9d9d9 25%,#c4c4c4);border:1px solid #3d6ea8"></div>
  <div class="abs" style="left:27px;top:2px;font-size:14px;line-height:18px;font-weight:bold;color:#fff;letter-spacing:0">ConfServo</div>
  <div class="dbtn" style="left:364px"><i class="abs" style="left:4px;top:9px;width:6px;height:2px;background:#fff"></i></div>
  <div class="dbtn" style="left:383px"><i class="abs" style="left:4px;top:4px;width:7px;height:7px;border:1px solid #fff;border-top-width:3px"></i></div>
  <div class="dbtn" style="left:402px"><svg class="abs" style="left:3px;top:3px" width="9" height="9" viewBox="0 0 9 9"><path d="M1.500 1.500L7.500 7.500M7.500 1.500L1.500 7.500" stroke="#fff" stroke-width="2.400"/></svg></div>
 </div>
 <div id="dbody">
  <!-- tabs -->
  <div class="abs" style="left:0;top:29px;width:421px;height:412px;border:1px solid #b3b0ab;border-radius:0 4px 4px 4px;background:#f1f0ee"></div>
  <div class="abs" style="left:0;top:0;width:54px;height:30px;border:1px solid #b3b0ab;border-bottom:none;border-radius:4px 4px 0 0;background:#f1f0ee;border-top:3px solid #98b9e3;box-shadow:inset 0 1px 0 #7ba0d6"></div>
  <div class="abs" style="left:5px;top:6px;width:44px;height:19px;border:1px solid #86a5d2;border-radius:3px;background:#e4ebf5"></div>
  <div class="abs dl" style="left:7px;top:7px">Servo</div>
  <div class="abs" style="left:54px;top:3px;width:45px;height:26px;border:1px solid #b3b0ab;border-bottom:none;border-radius:4px 4px 0 0;background:linear-gradient(#eceae7,#dcdad6)"></div>
  <div class="abs dl" style="left:61px;top:8px">Port</div>
  <!-- row Test / Scaling -->
  <div class="abs dl" style="left:52px;top:50px">Test:</div>
  <div class="abs dl" style="left:52px;top:70px">Scaling:</div>
  <div class="hsb" style="left:112px;top:51px;width:191px;height:20px">
   <div class="sbb" style="left:0"><svg width="8" height="9" viewBox="0 0 8 9"><path d="M6 1L2 4.500L6 8" fill="none" stroke="#111" stroke-width="1.600"/></svg></div>
   <div class="thumb" style="left:78px;width:34px"><i class="grip"></i></div>
   <div class="sbb" style="right:0"><svg width="8" height="9" viewBox="0 0 8 9"><path d="M2 1L6 4.500L2 8" fill="none" stroke="#111" stroke-width="1.600"/></svg></div>
  </div>
  <div class="hsb" style="left:112px;top:74px;width:191px;height:20px">
   <div class="sbb" style="left:0"><svg width="8" height="9" viewBox="0 0 8 9"><path d="M6 1L2 4.500L6 8" fill="none" stroke="#aaa" stroke-width="1.300"/></svg></div>
   <div class="thumb" style="left:14px;width:80px"><i class="grip"></i></div>
   <div class="sbb" style="right:0"><svg width="8" height="9" viewBox="0 0 8 9"><path d="M2 1L6 4.500L2 8" fill="none" stroke="#111" stroke-width="1.600"/></svg></div>
  </div>
  <div class="spin" style="left:313px;top:51px;width:48px;height:23px"><span>0</span><b class="up"></b><b class="dn dis"></b></div>
  <div class="spin" style="left:313px;top:74px;width:48px;height:23px"><span>0</span><b class="up"></b><b class="dn dis"></b></div>
  <!-- middle group -->
  <div class="spin" style="left:43px;top:129px;width:58px;height:23px"><span>128</span><b class="up"></b><b class="dn"></b></div>
  <div class="spin" style="left:43px;top:158px;width:58px;height:23px"><span>512</span><b class="up"></b><b class="dn"></b></div>
  <div class="spin" style="left:43px;top:189px;width:58px;height:23px"><span>128</span><b class="up"></b><b class="dn"></b></div>
  <div class="abs" style="left:211px;top:139px;width:166px;height:5px;border:1px solid #a5a29d;background:#d9d7d4"></div>
  <div class="abs" style="left:341px;top:139px;width:36px;height:5px;border:1px solid #5b82bb;background:#7fa5da"></div>
  <div class="shandle" style="left:321px;top:134px"><i class="grip"></i></div>
  <div class="abs" style="left:377px;top:131px;width:6px;height:31px;background:#000"></div>
  <div class="hsb" style="left:110px;top:161px;width:281px;height:20px">
   <div class="sbb" style="left:0"><svg width="8" height="9" viewBox="0 0 8 9"><path d="M6 1L2 4.500L6 8" fill="none" stroke="#111" stroke-width="1.600"/></svg></div>
   <div class="thumb" style="left:124px;width:34px"><i class="grip"></i></div>
   <div class="sbb" style="right:0"><svg width="8" height="9" viewBox="0 0 8 9"><path d="M2 1L6 4.500L2 8" fill="none" stroke="#111" stroke-width="1.600"/></svg></div>
  </div>
  <div class="abs" style="left:117px;top:181px;width:6px;height:31px;background:#000"></div>
  <div class="abs" style="left:123px;top:199px;width:145px;height:5px;border:1px solid #a5a29d;background:#d9d7d4"></div>
  <div class="abs" style="left:123px;top:199px;width:32px;height:5px;border:1px solid #5b82bb;background:#7fa5da"></div>
  <div class="shandle" style="left:153px;top:194px"><i class="grip"></i></div>
  <!-- PID -->
  <div class="abs dl" style="left:52px;top:245px;font-weight:bold;font-family:'DejaVu Sans',sans-serif">P:</div>
  <div class="spin" style="left:73px;top:242px;width:45px;height:25px"><span style="top:3px">0</span><b class="up"></b><b class="dn dis"></b></div>
  <div class="abs dl" style="left:132px;top:245px;font-weight:bold;font-family:'DejaVu Sans',sans-serif">I:</div>
  <div class="spin" style="left:153px;top:242px;width:45px;height:25px"><span style="top:3px">0</span><b class="up"></b><b class="dn dis"></b></div>
  <div class="abs dl" style="left:212px;top:245px;font-weight:bold;font-family:'DejaVu Sans',sans-serif">D:</div>
  <div class="spin" style="left:233px;top:242px;width:45px;height:25px"><span style="top:3px">0</span><b class="up"></b><b class="dn dis"></b></div>
  <div class="abs dl" style="left:72px;top:280px;letter-spacing:.2px">MinPwm</div>
  <div class="abs dl" style="left:152px;top:280px;letter-spacing:.2px">MaxPwm</div>
  <div class="spin" style="left:73px;top:302px;width:45px;height:23px"><span>0</span><b class="up"></b><b class="dn dis"></b></div>
  <div class="spin" style="left:153px;top:302px;width:45px;height:23px"><span>0</span><b class="up"></b><b class="dn dis"></b></div>
  <!-- buttons -->
  <div class="pbtn" style="left:223px;top:342px"><span class="bt">Cancel<i class="ul" style="left:0;width:9.800px"></i></span></div>
  <div class="pbtn dflt" style="left:314px;top:342px"><span class="bt">OK<i class="ul" style="left:0;width:11px"></i></span></div>
 </div>
 <div id="dfoot"><i class="abs" style="left:25px;top:0;width:1px;height:5px;background:#1c2c40"></i><i class="abs" style="right:25px;top:0;width:1px;height:5px;background:#1c2c40"></i></div>
</div>
</body></html>
